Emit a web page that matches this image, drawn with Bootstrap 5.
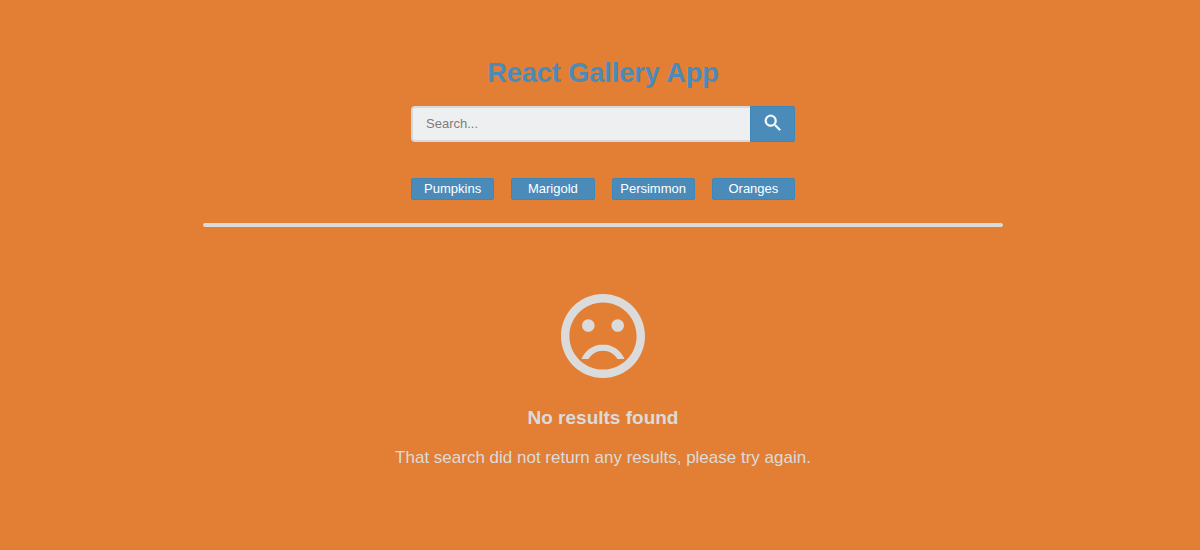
<!DOCTYPE html>
<html lang="en">
<head>
<meta charset="utf-8">
<meta name="viewport" content="width=device-width, initial-scale=1">
<title>React Gallery App</title>
<link rel="stylesheet" href="https://cdn.jsdelivr.net/npm/bootstrap@5.3.0/dist/css/bootstrap.min.css">
<style>
:root { --gallery-orange: #e27f34; --gallery-blue: #4a8bba; --gallery-pale: #dbdbdb; }
body { background: var(--gallery-orange); color: var(--gallery-pale); font-family: "Liberation Sans", Arial, sans-serif; padding-left: 6px; }
.gallery-app { max-width: 800px; padding-top: 56px; }
.gallery-title { color: var(--gallery-blue); font-size: 27px; line-height: 34px; margin-bottom: 16px; }
.gallery-tools { max-width: 384px; }
.search-bar { height: 36px; margin-bottom: 36px; }
.search-field { background: #eeeff1; border: 2px solid #d5dade; border-right: 0; border-radius: 4px 0 0 4px; font-size: 13px; line-height: 20px; padding: 6px 13px; }
.search-field::placeholder { color: #7c7c7c; }
.search-button { width: 45px; background: var(--gallery-blue); border: 1px solid #3d88b9; border-radius: 0 2px 2px 0; }
.search-button svg { margin-bottom: 2px; }
.topic-list { gap: 17px; }
.topic-link { flex: 1 1 0; background: var(--gallery-blue); border: 1px solid #3d88b9; border-radius: 2px; color: #fff; font-size: 13px; line-height: 20px; }
.rule-line { height: 4px; border-radius: 2px; background: var(--gallery-pale); margin-top: 23px; margin-bottom: 67px; }
.sad-face { width: 84px; height: 84px; margin-bottom: 28px; }
.empty-title { font-size: 19px; line-height: 24px; margin-bottom: 16px; }
.empty-text { font-size: 17px; line-height: 24px; }
</style>
</head>
<body>
<main class="gallery-app container-fluid px-0 text-center">
  <h1 class="gallery-title fw-bold">React Gallery App</h1>
  <div class="gallery-tools mx-auto">
    <form class="search-bar d-flex" role="search" aria-label="Search">
      <input class="search-field form-control" id="search" type="text" placeholder="Search..." aria-label="Search">
      <button class="search-button flex-shrink-0 d-flex align-items-center justify-content-center p-0" type="submit" aria-label="Search">
        <svg width="22" height="22" viewBox="0 0 24 24" fill="#fff" stroke="#fff" stroke-width=".3" aria-hidden="true"><path d="M15.5 14h-.79l-.28-.27A6.471 6.471 0 0 0 16 9.500 6.500 6.500 0 1 0 9.500 16c1.610 0 3.090-.590 4.230-1.570l.270.280v.790l5 4.990L20.490 19l-4.990-5zm-6 0C7.010 14 5 11.990 5 9.500S7.010 5 9.500 5 14 7.010 14 9.500 11.990 14 9.500 14z"/></svg>
      </button>
    </form>
    <nav class="topic-list d-flex" aria-label="Topics">
      <a class="topic-link text-decoration-none" href="#pumpkins">Pumpkins</a>
      <a class="topic-link text-decoration-none" href="#marigold">Marigold</a>
      <a class="topic-link text-decoration-none" href="#persimmon">Persimmon</a>
      <a class="topic-link text-decoration-none" href="#oranges">Oranges</a>
    </nav>
  </div>
  <div class="rule-line"></div>
  <section>
    <svg class="sad-face d-block mx-auto" viewBox="2 2 20 20" fill="currentColor" aria-hidden="true"><circle cx="15.5" cy="9.5" r="1.5"/><circle cx="8.500" cy="9.500" r="1.500"/><path d="M12 14c-2.330 0-4.320 1.450-5.120 3.500h1.670c.690-1.190 1.970-2 3.450-2s2.750.810 3.450 2h1.670c-.800-2.050-2.790-3.500-5.120-3.500zM11.990 2C6.470 2 2 6.480 2 12s4.470 10 9.990 10C17.520 22 22 17.520 22 12S17.520 2 11.990 2zM12 20c-4.420 0-8-3.580-8-8s3.580-8 8-8 8 3.580 8 8-3.580 8-8 8z"/></svg>
    <h2 class="empty-title fw-bold">No results found</h2>
    <p class="empty-text mb-0">That search did not return any results, please try again.</p>
  </section>
</main>
<script src="https://cdn.jsdelivr.net/npm/bootstrap@5.3.0/dist/js/bootstrap.bundle.min.js"></script>
</body>
</html>
